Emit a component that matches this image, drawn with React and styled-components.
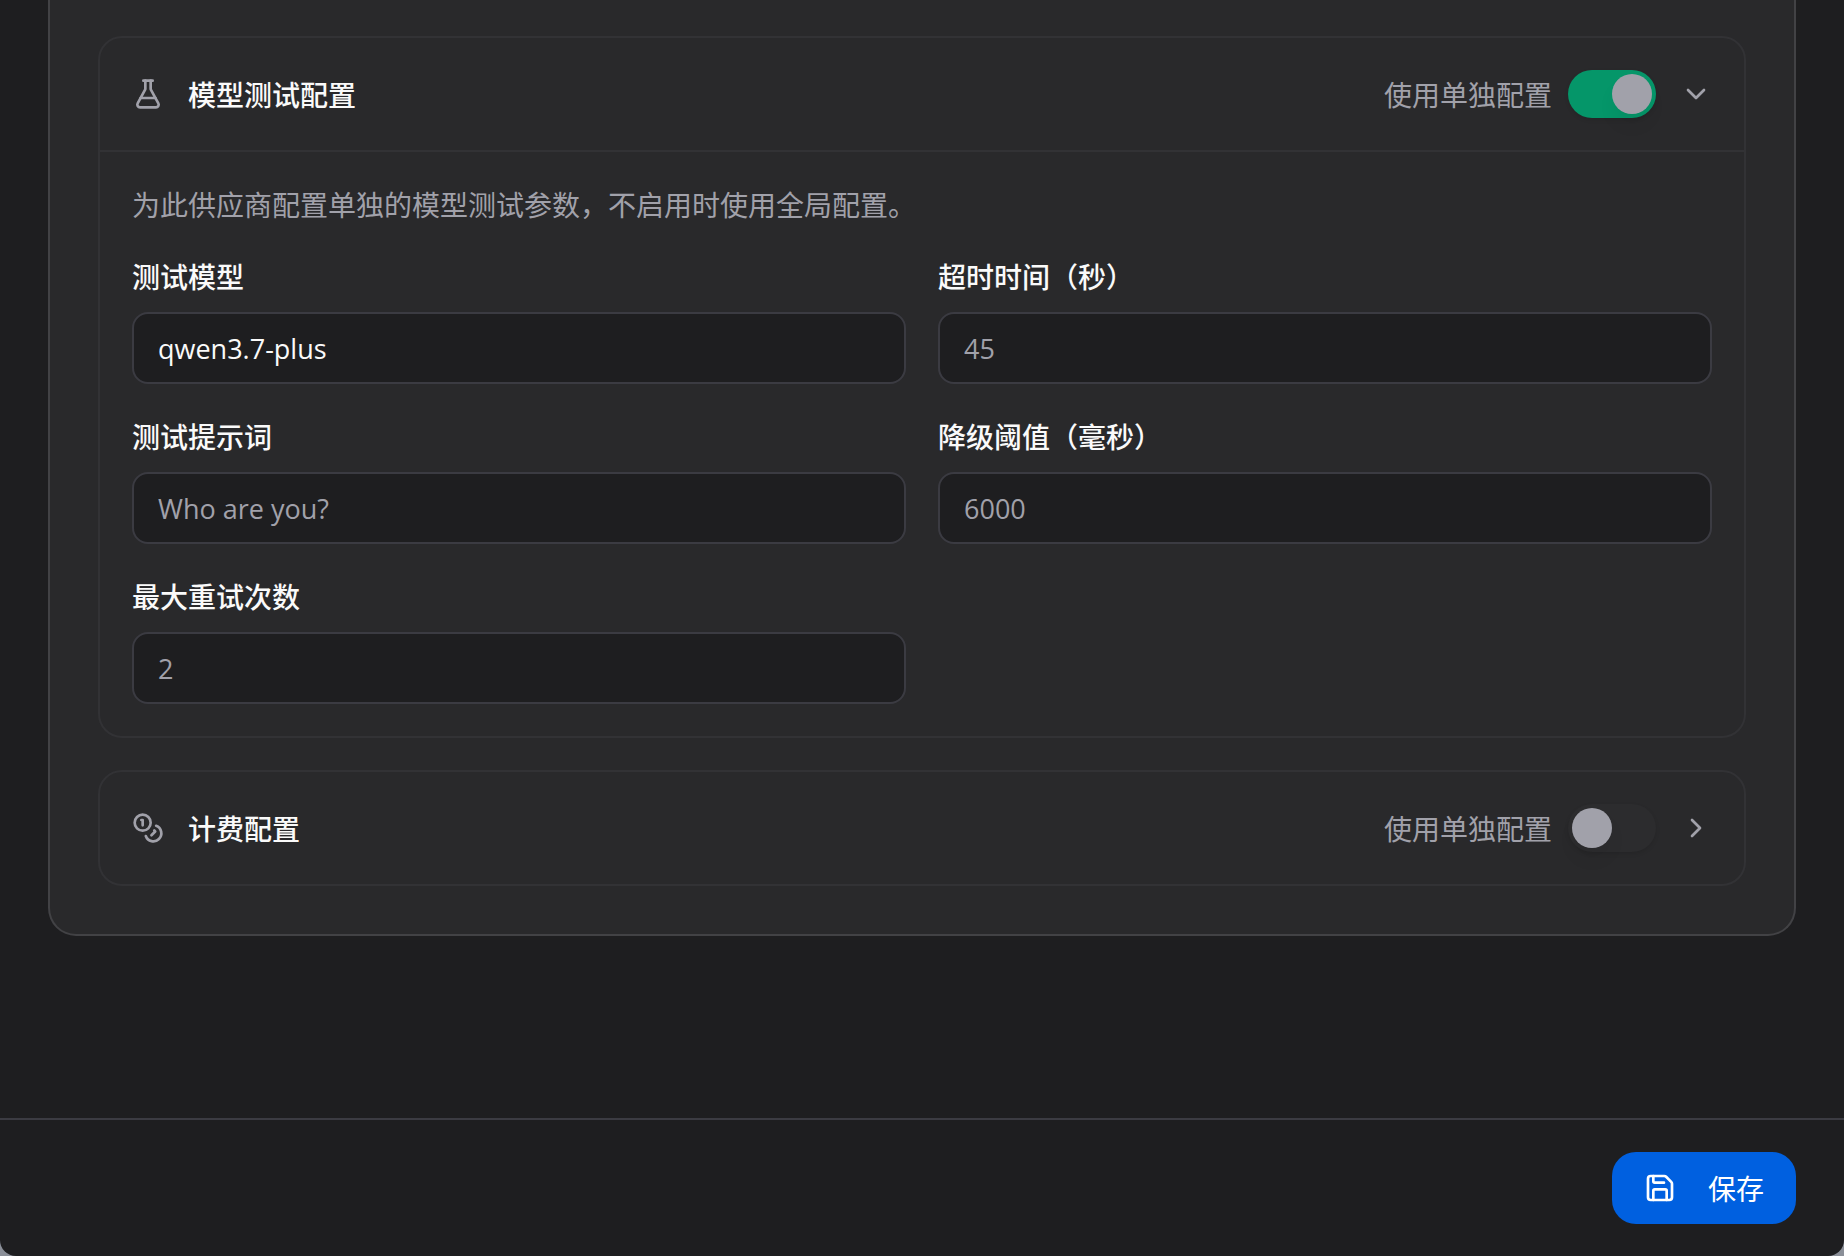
import { useState } from 'react'
import styled, { createGlobalStyle } from 'styled-components'
import { ChevronDown, ChevronRight, FlaskConical, Save } from 'lucide-react'

const GlobalStyle = createGlobalStyle`
    *{
        box-sizing:border-box;
    }
    body{
        margin:0;
        background:#8b8f98;
        color:#fafafa;
        font-family:"Noto Sans CJK SC", sans-serif;
        font-size:28px;
        line-height:40px;
    }
`;

const testFields = [
    { id: 'test-model', label: '测试模型', type: 'text', value: 'qwen3.7-plus' },
    { id: 'timeout', label: '超时时间（秒）', type: 'number', placeholder: '45' },
    { id: 'prompt', label: '测试提示词', type: 'text', placeholder: 'Who are you?' },
    { id: 'threshold', label: '降级阈值（毫秒）', type: 'number', placeholder: '6000' },
    { id: 'retries', label: '最大重试次数', type: 'number', placeholder: '2' },
]

const CoinsIcon = () => (
    <svg width="32" height="32" viewBox="0 0 24 24" fill="none" stroke="currentColor" strokeWidth="2" strokeLinecap="round" strokeLinejoin="round">
        <circle cx="8" cy="8" r="6" />
        <path d="M18.09 10.37A6 6 0 1 1 10.34 18" />
        <path d="M7 6h1v4" />
        <path d="m16.71 13.88.7.71-2.82 2.82" />
    </svg>
)

const ConfigCard = ({ id, icon, title, defaultOn, children }) => {
    const [on, setOn] = useState(defaultOn)
    const [open, setOpen] = useState(defaultOn)
    return (
        <Card>
            <CardHeader>
                {icon}
                <Title>{title}</Title>
                <SwitchLabel htmlFor={id}>使用单独配置</SwitchLabel>
                <Switch id={id} type="checkbox" role="switch" checked={on} onChange={(e) => setOn(e.target.checked)} />
                <Toggle type="button" aria-label={title} aria-expanded={open} onClick={() => setOpen(!open)}>
                    {open ? <ChevronDown size={32} /> : <ChevronRight size={32} />}
                </Toggle>
            </CardHeader>
            {open && children}
        </Card>
    )
}

const App = () => {
    return (
        <Window>
            <GlobalStyle />
            <Content>
                <Panel>
                    <ConfigCard id="use-test" icon={<FlaskConical size={32} />} title="模型测试配置" defaultOn>
                        <CardBody>
                            <Description>为此供应商配置单独的模型测试参数，不启用时使用全局配置。</Description>
                            <Fields>
                                {testFields.map((field) => (
                                    <Field key={field.id}>
                                        <Label htmlFor={field.id}>{field.label}</Label>
                                        <Input id={field.id} type={field.type} defaultValue={field.value} placeholder={field.placeholder} />
                                    </Field>
                                ))}
                            </Fields>
                        </CardBody>
                    </ConfigCard>
                    <ConfigCard id="use-billing" icon={<CoinsIcon />} title="计费配置" defaultOn={false} />
                </Panel>
            </Content>
            <Footer>
                <SaveButton type="button">
                    <Save size={32} />
                    保存
                </SaveButton>
            </Footer>
        </Window>
    )
}

const Window = styled.div`
    min-height:100vh;
    display:flex;
    flex-direction:column;
    background:#1e1e20;
    border-radius:0 0 16px 16px;
    overflow:hidden;
`;
const Content = styled.main`
    flex:1;
    padding:0 48px;
`;
const Panel = styled.section`
    display:flex;
    flex-direction:column;
    gap:32px;
    padding:36px 48px 48px;
    background:#29292b;
    border:2px solid #424245;
    border-top:0;
    border-radius:0 0 28px 28px;
`;
const Card = styled.div`
    border:2px solid #323235;
    border-radius:24px;
`;
const CardHeader = styled.div`
    display:flex;
    align-items:center;
    padding:32px;
    min-height:112px;
    color:#a1a1aa;
`;
const Title = styled.h2`
    margin:0 auto 0 24px;
    color:#fafafa;
    font-size:28px;
    font-weight:500;
`;
const SwitchLabel = styled.label`
    margin-right:16px;
`;
const Switch = styled.input`
    appearance:none;
    width:88px;
    height:48px;
    margin:0 24px 0 0;
    padding:4px;
    display:flex;
    justify-content:${(props) => (props.checked ? 'flex-end' : 'flex-start')};
    border-radius:24px;
    background:${(props) => (props.checked ? '#059669' : '#2c2c2e')};
    box-shadow:0 2px 4px rgba(0, 0, 0, 0.1);
    cursor:pointer;

    &:before{
        content:"";
        width:40px;
        height:40px;
        border-radius:50%;
        background:#a1a1aa;
        box-shadow:0 12px 20px -4px rgba(0, 0, 0, 0.08);
    }
`;
const Toggle = styled.button`
    display:flex;
    padding:0;
    border:0;
    background:none;
    color:inherit;
    cursor:pointer;
`;
const CardBody = styled.div`
    padding:32px;
    border-top:2px solid #323235;
`;
const Description = styled.p`
    margin:0 0 32px;
    color:#a1a1aa;
`;
const Fields = styled.div`
    display:grid;
    grid-template-columns:1fr 1fr;
    gap:32px;
`;
const Field = styled.div`
    display:flex;
    flex-direction:column;
    gap:16px;
`;
const Label = styled.label`
    font-weight:500;
`;
const Input = styled.input`
    width:100%;
    height:72px;
    padding:0 24px;
    border:2px solid #3b3b42;
    border-radius:16px;
    background:#1e1e20;
    color:#fafafa;
    font-family:"Open Sans", "Noto Sans CJK SC", sans-serif;
    font-size:27px;
    appearance:textfield;

    &::placeholder{
        color:#a1a1aa;
    }
`;
const Footer = styled.footer`
    display:flex;
    justify-content:flex-end;
    padding:32px 48px;
    border-top:2px solid #3b3b42;
`;
const SaveButton = styled.button`
    display:flex;
    align-items:center;
    gap:32px;
    height:72px;
    padding:0 32px;
    border:0;
    border-radius:24px;
    background:#0060e0;
    color:#fff;
    font-family:inherit;
    font-size:28px;
    cursor:pointer;
`;
export default App;
